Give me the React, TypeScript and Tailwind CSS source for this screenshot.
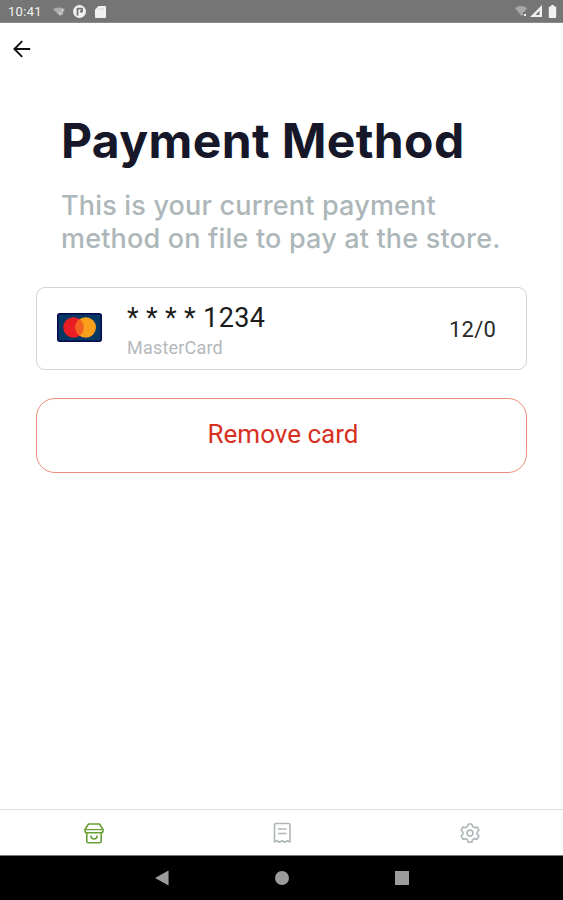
import type { ReactNode } from 'react';

const TABS: { id: string; color: string; icon: ReactNode }[] = [
  {
    id: 'store',
    color: 'text-[#6a9f35]',
    icon: (
      <>
        <path d="M5.5 2h11l3.5 5.5v1.2c0 1.3-.8 2.1-2 2.1H4c-1.2 0-2-.8-2-2.1V7.5z" />
        <path d="M2.5 7.7h17" strokeWidth="1.2" />
        <path d="M3.8 11v8.2c0 1 .6 1.6 1.6 1.6h11.2c1 0 1.6-.6 1.6-1.6V11" />
        <path d="M8 14c0 4 6 4 6 0" />
      </>
    ),
  },
  {
    id: 'receipts',
    color: 'text-[#aeb6b8] pl-[2px]',
    icon: (
      <>
        <path d="M3.5 20V2.7c0-.8.4-1.2 1.2-1.2h13.1c.8 0 1.2.4 1.2 1.2V20l-2.6-1.3-2.6 1.6-2.6-1.6-2.6 1.6-2.6-1.6z" />
        <path d="M7.5 7H15M7.5 11.5H15" />
      </>
    ),
  },
  {
    id: 'settings',
    color: 'text-[#aeb6b8] pl-px',
    icon: (
      <>
        <path d="M9.3 2h3.4l1 2.6 1.7 1 2.7-.5 1.8 3-1.8 2.1v1.700l1.8 2.200-1.8 3-2.700-.5-1.700 1-1 2.600H9.300l-1-2.600-1.700-1-2.700.5-1.800-3 1.800-2.200v-1.700L2.100 8.100l1.800-3 2.700.5 1.700-1z" />
        <circle cx="11" cy="11.1" r="3" />
      </>
    ),
  },
];

function StatusBar() {
  return (
    <div className="h-[23px] shrink-0 bg-[#757575] border-b border-[#8c8c8c] flex items-center justify-between pl-2 pr-[6px] text-[#f2f2f2]">
      <div className="flex items-center h-full pt-px">
        <span className="w-[45px] text-[13px] leading-none tracking-[0.3px]">10:41</span>
        <svg className="w-[13px] h-[12px]" viewBox="0 0 13 12" fill="currentColor">
          <path d="M0 3.500C3 .8 9 .8 12 3.500L7 10z" opacity=".45" />
          <path d="M6 6h1.500v3H6zM8.500 3.500h2v2h-2zM8.500 6.500H10V9H8.500z" opacity=".55" />
        </svg>
        <svg className="ml-[7px] w-[13px] h-[13px]" viewBox="0 0 13 13">
          <circle cx="6.5" cy="6.5" r="6.5" fill="currentColor" />
          <path d="M4.500 10.500V3.700h4.500v2.800H7" fill="none" stroke="#757575" strokeWidth="1.8" />
        </svg>
        <svg className="ml-[9px] w-[11px] h-[12px]" viewBox="0 0 11 12" fill="currentColor">
          <path d="M3.500 0H10a1 1 0 0 1 1 1v10a1 1 0 0 1-1 1H1a1 1 0 0 1-1-1V3.500z" />
          <path d="M3.800 2v2M6 2v2M8.200 2v2" stroke="#ccc" strokeWidth=".8" />
        </svg>
      </div>
      <div className="flex items-center">
        <svg className="w-[13px] h-[12px]" viewBox="0 0 13 12" fill="currentColor">
          <path d="M0 3C3.500.2 8.500.2 12 3L9.500 7H8v3L6.500 11z" opacity=".4" />
          <path d="M9 9h2v2H9z" />
        </svg>
        <svg className="ml-[2px] w-[12px] h-[12px]" viewBox="0 0 12 12" fill="currentColor">
          <path d="M12 0v12H0zM9.500 5.500L5.500 10h4z" fillRule="evenodd" />
        </svg>
        <svg className="ml-[6px] w-[9px] h-[13px]" viewBox="0 0 9 14" fill="currentColor">
          <path d="M3 0h3v1.500h1.500A1 1 0 0 1 8.500 2.500V13a1 1 0 0 1-1 1h-6a1 1 0 0 1-1-1V2.500a1 1 0 0 1 1-1H3z" />
        </svg>
      </div>
    </div>
  );
}

function MasterCardLogo() {
  return (
    <svg className="w-[45px] h-[29px] shrink-0" viewBox="0 0 45 29">
      <rect x=".75" y=".75" width="43.5" height="27.5" rx="2" fill="#073763" stroke="#06094f" strokeWidth="1.5" />
      <circle cx="16.5" cy="14.5" r="10.3" fill="#ea1d25" />
      <circle cx="28.7" cy="14.5" r="10.3" fill="#f99f1c" />
      <path d="M22.600 6.200a10.300 10.300 0 0 1 0 16.600a10.300 10.300 0 0 1 0-16.600z" fill="#f26122" />
    </svg>
  );
}

export default function App() {
  return (
    <div className="h-[900px] w-full flex flex-col bg-white overflow-hidden font-['Roboto',sans-serif]">
      <StatusBar />

      <main className="flex-1 flex flex-col">
        <button className="mt-4 ml-3 w-5 h-5" aria-label="Back">
          <svg className="w-5 h-5" viewBox="0 0 20 20" fill="none" stroke="#111" strokeWidth="1.9">
            <path d="M18.200 10H2.500M10.200 2.200L2.400 10l7.800 7.800" />
          </svg>
        </button>

        <div className="mt-[58px] pl-[61px] font-['Inter',sans-serif]">
          <h1 className="text-[48px] leading-[48px] tracking-[0.38px] font-bold text-[#161829] whitespace-nowrap">
            Payment Method
          </h1>
          <p className="mt-6 text-[27px] leading-[33px] tracking-[0.18px] font-medium text-[#adb7b9] whitespace-nowrap">
            This is your current payment
            <br />
            method on file to pay at the store.
          </p>
        </div>

        <div className="mt-[32px] mx-9 h-[83px] rounded-[9px] border border-[#d2d3d5] flex items-center pl-5 pr-[30px]">
          <div className="-mt-[2px]">
            <MasterCardLogo />
          </div>
          <div className="ml-[25px] flex-1 pt-1">
            <div className="text-[27px] leading-8 tracking-[0.35px] text-[#1c1c1c] whitespace-nowrap">
              * * * * 1234
            </div>
            <div className="mt-[2px] text-[18px] leading-6 tracking-[0.2px] text-[#b4b8bd]">MasterCard</div>
          </div>
          <span className="mt-[3px] text-[22px] leading-7 tracking-[0.2px] text-[#2a2a2a]">12/0</span>
        </div>

        <button className="mt-[28px] mx-9 h-[75px] pb-1 pl-[3px] rounded-[19px] border-[1.5px] border-[#ed8c7c] text-[26px] leading-8 text-[#d8301f]">
          Remove card
        </button>
      </main>

      <nav className="h-[46px] shrink-0 border-t border-[#dedede] grid grid-cols-3">
        {TABS.map((tab) => (
          <button key={tab.id} aria-label={tab.id} className={`flex items-center justify-center ${tab.color}`}>
            <svg
              className="w-[22px] h-[22px]"
              viewBox="0 0 22 22"
              fill="none"
              stroke="currentColor"
              strokeWidth="1.6"
              strokeLinejoin="round"
              strokeLinecap="round"
            >
              {tab.icon}
            </svg>
          </button>
        ))}
      </nav>

      <div className="h-[45px] shrink-0 bg-black border-t border-[#777] flex items-center justify-center gap-[106px] text-[#9c9c9c]">
        <svg className="w-[14px] h-[16px]" viewBox="0 0 15 16" fill="currentColor">
          <path d="M0 8L14.500 0v16z" />
        </svg>
        <span className="w-[14px] h-[14px] rounded-full bg-[#9c9c9c]" />
        <span className="w-[14px] h-[14px] bg-[#9c9c9c]" />
      </div>
    </div>
  );
}
